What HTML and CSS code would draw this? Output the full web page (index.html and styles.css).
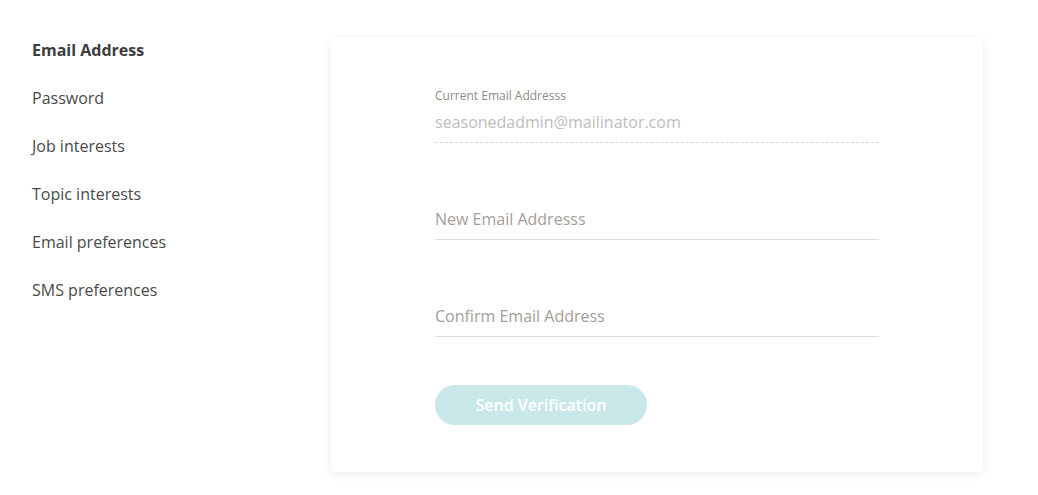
FILE: index.html
```html
<!DOCTYPE html>
<html>
<head>
  <title>Account settings</title>
  <link rel="stylesheet" href="styles.css">
</head>
<body>
  <div class="layout">
    <nav class="sidebar">
      <ul>
        <li class="active">Email Address</li>
        <li>Password</li>
        <li>Job interests</li>
        <li>Topic interests</li>
        <li>Email preferences</li>
        <li>SMS preferences</li>
      </ul>
    </nav>

    <section class="card">
      <form class="email-form">
        <div class="field current">
          <label>Current Email Addresss</label>
          <div class="value">seasonedadmin@mailinator.com</div>
        </div>
        <div class="field">
          <input type="email" placeholder="New Email Addresss">
        </div>
        <div class="field">
          <input type="email" placeholder="Confirm Email Address">
        </div>
        <button type="button" class="send-btn" disabled>Send Verification</button>
      </form>
    </section>
  </div>
</body>
</html>
```

FILE: styles.css
```css
body {
  font-family: 'Open Sans', sans-serif;
  background-color: #fff;
  color: #444;
  margin: 0;
}

.layout {
  display: grid;
  grid-template-columns: 299px 652px;
  padding: 38px 0 0 32px;
}

.sidebar ul {
  list-style: none;
  margin: 0;
  padding: 0;
}

.sidebar li {
  font-size: 16px;
  line-height: 24px;
  margin-bottom: 24px;
  color: #4a4a4a;
}

.sidebar li.active {
  font-weight: bold;
  color: #3d3d3d;
}

.card {
  background-color: #fff;
  border-radius: 4px;
  box-shadow: 0 2px 10px rgba(0, 0, 0, 0.08);
  padding: 50px 0 47px;
  margin-bottom: 20px;
}

.email-form {
  width: 444px;
  margin: 0 auto;
  display: flex;
  flex-direction: column;
}

.field {
  border-bottom: 1px solid #dcdcdc;
  padding-bottom: 8px;
  margin-bottom: 64px;
}

.field.current {
  border-bottom: 1px dashed #d6d6d6;
}

.field:nth-child(3) {
  margin-bottom: 48px;
}

.field label {
  display: block;
  font-size: 12px;
  line-height: 16px;
  color: #8c8a88;
  margin-bottom: 6px;
}

.field .value {
  font-size: 16px;
  line-height: 24px;
  color: #bdbdbd;
}

.field input {
  display: block;
  width: 100%;
  border: none;
  outline: none;
  padding: 0;
  font-family: 'Open Sans', sans-serif;
  font-size: 16px;
  line-height: 24px;
  height: 24px;
  color: #444;
  background: transparent;
}

.field input::placeholder {
  color: #a39e9a;
}

.send-btn {
  align-self: flex-start;
  width: 212px;
  height: 40px;
  border: none;
  border-radius: 20px;
  background-color: #c9e8ea;
  color: #fff;
  font-family: 'Open Sans', sans-serif;
  font-weight: 600;
  font-size: 16px;
  padding: 0;
}
```
